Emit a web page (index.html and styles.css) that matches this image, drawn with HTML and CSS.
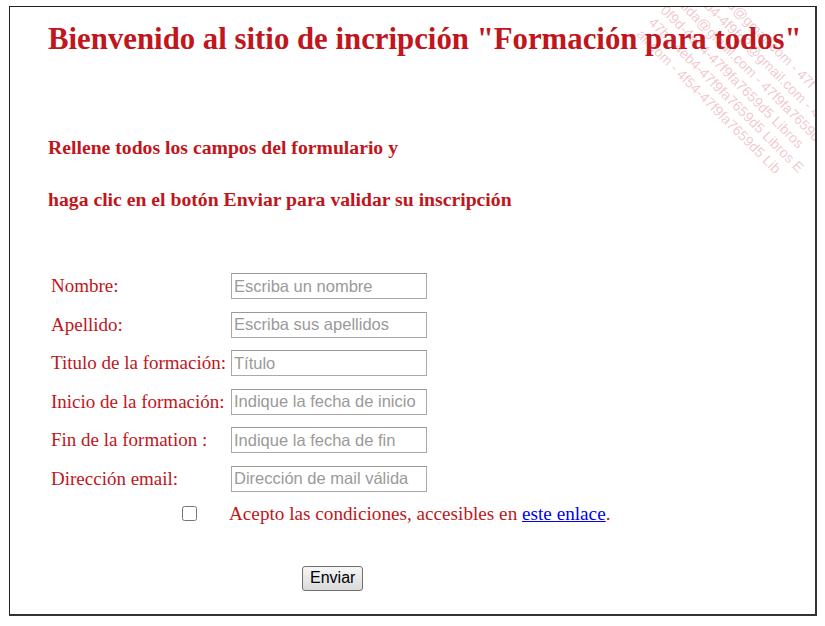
FILE: index.html
```html
<!DOCTYPE html>
<html lang="es">
<head>
    <meta charset="UTF-8">
    <meta name="viewport" content="width=device-width, initial-scale=1.0">
    <title>Formación para todos</title>
    <link rel="stylesheet" href="styles.css">
</head>
<body>
    <div class="frame">
        <h1>Bienvenido al sitio de incripción "Formación para todos"</h1>
        <h3 class="intro">Rellene todos los campos del formulario y</h3>
        <h3 class="intro">haga clic en el botón Enviar para validar su inscripción</h3>

        <form class="form">
            <div class="fields">
                <label for="nombre">Nombre:</label>
                <input type="text" id="nombre" placeholder="Escriba un nombre">
                <label for="apellido">Apellido:</label>
                <input type="text" id="apellido" placeholder="Escriba sus apellidos">
                <label for="titulo">Titulo de la formación:</label>
                <input type="text" id="titulo" placeholder="Título">
                <label for="inicio">Inicio de la formación:</label>
                <input type="text" id="inicio" placeholder="Indique la fecha de inicio">
                <label for="fin">Fin de la formation :</label>
                <input type="text" id="fin" placeholder="Indique la fecha de fin">
                <label for="email">Dirección email:</label>
                <input type="text" id="email" placeholder="Dirección de mail válida">
            </div>
            <div class="terms">
                <input type="checkbox" id="acepto">
                <label for="acepto">Acepto las condiciones, accesibles en <a href="#">este enlace</a>.</label>
            </div>
            <div class="actions">
                <button type="button">Enviar</button>
            </div>
        </form>

        <div class="watermark">
            <span>b4-4f9fd@gmail.com - 47f</span>
            <span>2-4eb4-4f9fd2@gmail.com - 4f54</span>
            <span>nalda@gmail.com - 47f9fa7659d5 Li</span>
            <span>0f9d-4eb4-47f9fa7659d5 Libros</span>
            <span>47b2-4eb4-47f9fa7659d5 Libros E</span>
            <span>ail.com - 4f54-47f9fa7659d5 Lib</span>
        </div>
    </div>
</body>
</html>
```

FILE: styles.css
```css
body {
    margin: 0;
    background: #fff;
    font-family: "Liberation Serif", "Times New Roman", serif;
}
.frame {
    position: relative;
    overflow: hidden;
    margin: 6px 8px 0 9px;
    height: 607px;
    border: 1px solid #222;
    border-right: 2px solid #333;
    border-bottom: 2px solid #333;
    background: #fff;
}
h1 {
    margin: 15px 0 0 38px;
    font-size: 30.8px;
    white-space: nowrap;
    color: #c0161c;
}
.intro {
    margin: 0 0 0 38px;
    font-size: 19.7px;
    white-space: nowrap;
    color: #c0161c;
}
h1 + .intro {
    margin-top: 79px;
}
.intro + .intro {
    margin-top: 29px;
}
.form {
    margin: 62px 0 0 41px;
}
.fields {
    display: grid;
    grid-template-columns: 180px 196px;
    row-gap: 12.5px;
    align-items: center;
}
.fields label {
    font-size: 19px;
    white-space: nowrap;
    color: #c0161c;
}
.fields input {
    box-sizing: border-box;
    width: 196px;
    height: 26px;
    padding: 0 2px;
    border: 1px solid #a9a9a9;
    border-top-color: #999;
    font-family: "Liberation Sans", Arial, sans-serif;
    font-size: 16.5px;
}
.fields input::placeholder {
    color: #9a9a9a;
}
.terms {
    display: flex;
    align-items: center;
    margin: 11px 0 0 130px;
    font-size: 19.2px;
    color: #c0161c;
}
.terms input {
    width: 15px;
    height: 15px;
    margin: 0 32px 0 1px;
}
.terms a {
    color: #0000ee;
}
.actions {
    margin: 41px 0 0 251px;
}
.actions button {
    height: 25px;
    font-family: "Liberation Sans", Arial, sans-serif;
    font-size: 16px;
    padding: 0 7px;
    border: 1px solid #707070;
    border-radius: 3px;
    background: linear-gradient(#f6f6f6, #dadada);
    color: #000;
}
.watermark {
    position: absolute;
    top: 50px;
    left: 615px;
    width: 300px;
    transform: rotate(45deg);
    display: flex;
    flex-direction: column;
    font-family: "Liberation Sans", Arial, sans-serif;
    font-size: 14px;
    line-height: 17px;
    white-space: nowrap;
    color: rgba(205, 70, 90, 0.3);
    pointer-events: none;
}
```
